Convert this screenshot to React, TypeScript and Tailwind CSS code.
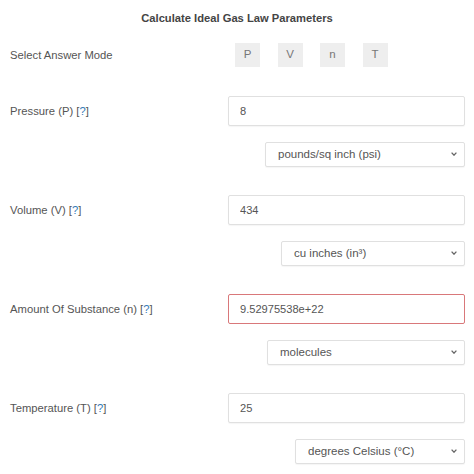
import React from "react";

function Chevron() {
  return (
    <svg
      className="pointer-events-none absolute right-[8px] top-1/2 -translate-y-1/2"
      width="6"
      height="4"
      viewBox="0 0 6 4"
    >
      <path d="M0.6 0.6 L3 3.2 L5.4 0.6" fill="none" stroke="#666" strokeWidth="1.3" />
    </svg>
  );
}

function Sel({ value, w }: { value: string; w: string }) {
  return (
    <div className={"relative h-[25px] " + w}>
      <select
        defaultValue={value}
        className="h-full w-full appearance-none rounded-[2px] border border-[#e0e0e0] bg-white pl-[12px] pr-[20px] text-[11.5px] text-[#555] shadow-[0_1px_1px_rgba(0,0,0,0.04)] outline-none"
      >
        <option>{value}</option>
      </select>
      <Chevron />
    </div>
  );
}

function Block({
  label,
  value,
  unit,
  selW,
  error,
}: {
  label: string;
  value: string;
  unit: string;
  selW: string;
  error?: boolean;
}) {
  return (
    <div className="flex flex-col">
      <div className="grid h-[30px] grid-cols-[228px_237px] items-center">
        <div className="pl-[10px] text-[11.25px] text-[#555]">
          {label} [<span className="text-[#337ab7]">?</span>]
        </div>
        <input
          defaultValue={value}
          className={
            "h-[30px] w-full rounded-[2px] border bg-white pl-[11px] text-[11.1px] text-[#555] outline-none " +
            (error ? "border-[#d9787a]" : "border-[#e0e0e0] shadow-[0_1px_1px_rgba(0,0,0,0.04)]")
          }
        />
      </div>
      <div className="mt-[15px] flex w-[465px] justify-end">
        <Sel value={unit} w={selW} />
      </div>
    </div>
  );
}

export default function App() {
  return (
    <div className="h-[474px] w-[474px] overflow-hidden bg-white font-['Liberation_Sans',Arial,sans-serif] text-[#555]">
      <div className="flex h-[36px] items-center justify-center text-[11.2px] font-bold text-[#444]">
        Calculate Ideal Gas Law Parameters
      </div>
      <div className="mt-[7px] grid h-[24px] grid-cols-[228px_237px] items-center">
        <div className="pl-[10px] text-[11.25px]">Select Answer Mode</div>
        <div className="flex gap-[17.5px] pl-[7px]">
          {["P", "V", "n", "T"].map((k) => (
            <div
              key={k}
              className="flex h-[24px] w-[25px] items-center justify-center bg-[#eeeeee] text-[11.5px] text-[#777]"
            >
              {k}
            </div>
          ))}
        </div>
      </div>
      <div className="mt-[29px] flex flex-col gap-[29px]">
        <Block label="Pressure (P)" value="8" unit="pounds/sq inch (psi)" selW="w-[200px]" />
        <Block label="Volume (V)" value="434" unit="cu inches (in³)" selW="w-[184px]" />
        <Block
          label="Amount Of Substance (n)"
          value="9.52975538e+22"
          unit="molecules"
          selW="w-[198px]"
          error
        />
        <Block label="Temperature (T)" value="25" unit="degrees Celsius (°C)" selW="w-[170px]" />
      </div>
    </div>
  );
}
